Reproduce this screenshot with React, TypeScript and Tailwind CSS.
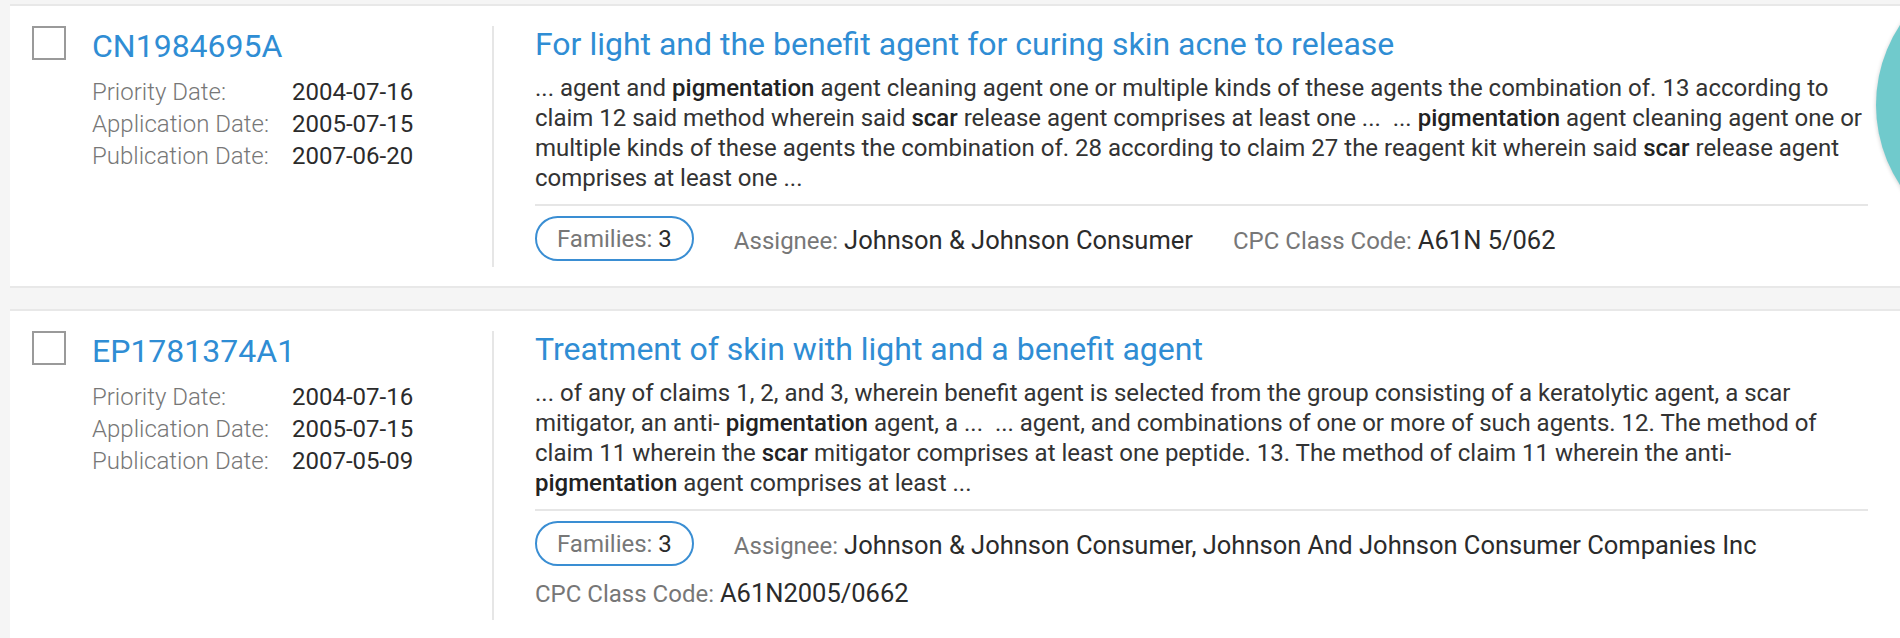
import React from "react";

type Part = { t: string; b?: boolean };

type Patent = {
  id: string;
  priority: string;
  application: string;
  publication: string;
  title: string;
  snippet: Part[];
  families: number;
  assignee: string;
  cpc: string;
};

const patents: Patent[] = [
  {
    id: "CN1984695A",
    priority: "2004-07-16",
    application: "2005-07-15",
    publication: "2007-06-20",
    title: "For light and the benefit agent for curing skin acne to release",
    snippet: [
      { t: "... agent and " },
      { t: "pigmentation", b: true },
      { t: " agent cleaning agent one or multiple kinds of these agents the combination of. 13 according to claim 12 said method wherein said " },
      { t: "scar", b: true },
      { t: " release agent comprises at least one ...\u00a0 ... " },
      { t: "pigmentation", b: true },
      { t: " agent cleaning agent one or multiple kinds of these agents the combination of. 28 according to claim 27 the reagent kit wherein said " },
      { t: "scar", b: true },
      { t: " release agent comprises at least one ..." },
    ],
    families: 3,
    assignee: "Johnson & Johnson Consumer",
    cpc: "A61N 5/062",
  },
  {
    id: "EP1781374A1",
    priority: "2004-07-16",
    application: "2005-07-15",
    publication: "2007-05-09",
    title: "Treatment of skin with light and a benefit agent",
    snippet: [
      { t: "... of any of claims 1, 2, and 3, wherein benefit agent is selected from the group consisting of a keratolytic agent, a scar mitigator, an anti- " },
      { t: "pigmentation", b: true },
      { t: " agent, a ...\u00a0 ... agent, and combinations of one or more of such agents. 12. The method of claim 11 wherein the " },
      { t: "scar", b: true },
      { t: " mitigator comprises at least one peptide. 13. The method of claim 11 wherein the anti- " },
      { t: "pigmentation", b: true },
      { t: " agent comprises at least ..." },
    ],
    families: 3,
    assignee: "Johnson & Johnson Consumer, Johnson And Johnson Consumer Companies Inc",
    cpc: "A61N2005/0662",
  },
];

function DateRow({ label, value }: { label: string; value: string }) {
  return (
    <div className="flex text-[24px] leading-[32px]">
      <span className="w-[200px] font-light text-[#777]">{label}</span>
      <span className="text-[#2b2b2b]">{value}</span>
    </div>
  );
}

function PatentCard({ p }: { p: Patent }) {
  return (
    <div className="flex border-y-2 border-[#e8e8e8] bg-white pt-[20px] pb-[19px]">
      {/* Left: checkbox, number, dates */}
      <div className="flex w-[482px] shrink-0 items-start gap-[26px] pl-[22px]">
        <div className="h-[34px] w-[34px] shrink-0 border-2 border-[#9a9a9a]" />
        <div>
          <div className="text-[32px] leading-[40px] text-[#2f8dd4]">{p.id}</div>
          <div className="mt-[10px]">
            <DateRow label="Priority Date:" value={p.priority} />
            <DateRow label="Application Date:" value={p.application} />
            <DateRow label="Publication Date:" value={p.publication} />
          </div>
        </div>
      </div>

      {/* Right: title, snippet, meta */}
      <div className="w-[1376px] shrink-0 border-l-2 border-[#e6e6e6] pl-[41px] pb-[6px]">
        <div className="text-[32px] leading-[36px] text-[#2f8dd4]">{p.title}</div>
        <p className="mt-[11px] text-[24px] leading-[30px] text-[#333]">
          {p.snippet.map((s, i) =>
            s.b ? (
              <span key={i} className="font-medium text-[#222]">
                {s.t}
              </span>
            ) : (
              <span key={i}>{s.t}</span>
            )
          )}
        </p>
        <div className="mt-[11px] border-t-2 border-[#e6e6e6]" />
        <div className="mt-[10px] flex flex-wrap items-center gap-x-[40px] gap-y-[3px] text-[24px]">
          <div className="flex h-[45px] items-center rounded-full border-2 border-[#3a8ed3] px-[20px]">
            <span className="text-[#777]">Families:&nbsp;</span>
            <span className="text-[#2b2b2b]">{p.families}</span>
          </div>
          <div className="h-[45px] pt-[6px] leading-[39px]">
            <span className="text-[#777]">Assignee: </span>
            <span className="text-[25.5px] leading-none text-[#2b2b2b]">{p.assignee}</span>
          </div>
          <div className="h-[45px] pt-[6px] leading-[39px]">
            <span className="text-[#777]">CPC Class Code: </span>
            <span className="text-[25.5px] leading-none text-[#2b2b2b]">{p.cpc}</span>
          </div>
        </div>
      </div>
    </div>
  );
}

export default function App() {
  return (
    <div
      className="relative h-[638px] w-[1900px] overflow-hidden bg-[#f5f5f5] pt-[4px] pl-[10px]"
      style={{ fontFamily: "Roboto, 'Noto Sans', sans-serif" }}
    >
      <div className="flex flex-col gap-[21px]">
        {patents.map((p) => (
          <PatentCard key={p.id} p={p} />
        ))}
      </div>

      {/* floating teal disc on the right edge */}
      <div className="absolute left-[1876px] top-[-40px] h-[290px] w-[290px] rounded-full bg-[#70cacc] shadow-[0_1px_4px_rgba(0,0,0,0.2)]" />
    </div>
  );
}
